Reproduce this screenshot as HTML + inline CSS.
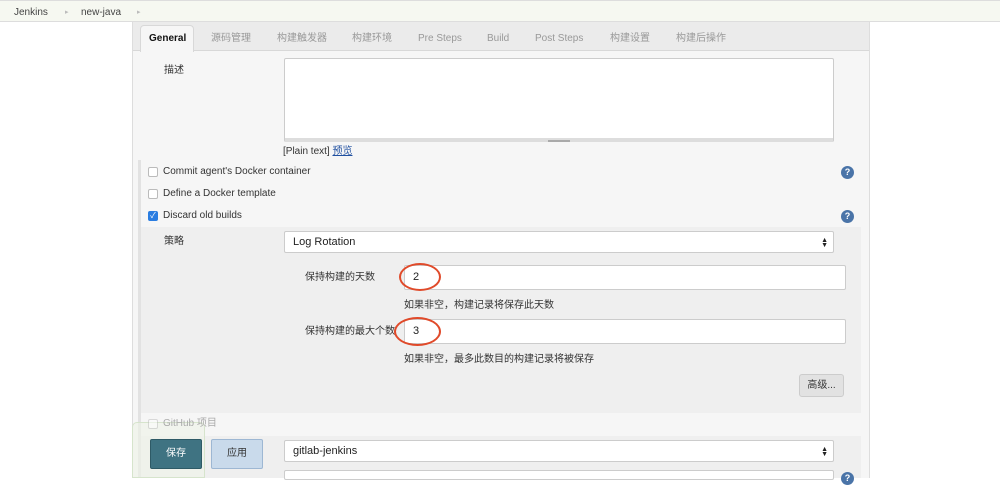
<!DOCTYPE html>
<html><head><meta charset="utf-8"><style>
*{margin:0;padding:0;box-sizing:border-box}
body{width:1000px;height:478px;overflow:hidden;background:#fff;font-family:"Liberation Sans","Noto Sans CJK SC",sans-serif;font-size:10px;line-height:12px;color:#333;position:relative}
.a{position:absolute;line-height:12px}
.cb{position:absolute;width:10px;height:10px;border:1px solid #bbb;border-radius:2px;background:#fff}
.inp{position:absolute;background:#fff;border:1px solid #ccc;border-radius:2px;font-size:11px;color:#222;padding-left:8px}
.help{position:absolute;width:13px;height:13px;border-radius:50%;background:#4a74a8;color:#fff;font-size:9px;font-weight:bold;text-align:center;line-height:13px}
.tab{position:absolute;top:33px;color:#999;font-size:10px;line-height:12px}
.ring{position:absolute;border:2px solid #e04a2a;border-radius:50%}
.arr{position:absolute;right:5px;top:6px;font-size:7px;line-height:5px;color:#222}
</style></head><body>
<div class="a" style="left:0;top:0;width:1000px;height:22px;background:#f6f8f1;border-top:1px solid #ddd;border-bottom:1px solid #ddd"></div>
<div class="a" style="left:14px;top:7px;font-size:10px;color:#444">Jenkins</div>
<div class="a" style="left:65px;top:7px;font-size:7px;color:#bbb">▸</div>
<div class="a" style="left:81px;top:7px;font-size:10px;color:#444">new-java</div>
<div class="a" style="left:137px;top:7px;font-size:7px;color:#bbb">▸</div>

<div class="a" style="left:132px;top:22px;width:738px;height:456px;background:#f6f6f6;border-left:1px solid #ddd;border-right:1px solid #ddd"></div>
<div class="a" style="left:133px;top:22px;width:736px;height:29px;background:#ebebeb;border-bottom:1px solid #d8d8d8"></div>
<div class="a" style="left:140px;top:25px;width:54px;height:27px;background:#f6f6f6;border:1px solid #d8d8d8;border-bottom:none;border-radius:4px 4px 0 0"></div>
<div class="tab" style="left:149px;color:#111;font-weight:bold">General</div>
<div class="tab" style="left:211px">源码管理</div>
<div class="tab" style="left:277px">构建触发器</div>
<div class="tab" style="left:352px">构建环境</div>
<div class="tab" style="left:418px">Pre Steps</div>
<div class="tab" style="left:487px">Build</div>
<div class="tab" style="left:535px">Post Steps</div>
<div class="tab" style="left:610px">构建设置</div>
<div class="tab" style="left:676px">构建后操作</div>

<div class="a" style="left:164px;top:65px">描述</div>
<div class="a" style="left:284px;top:58px;width:550px;height:84px;background:#fff;border:1px solid #ccc;border-radius:2px"></div>
<div class="a" style="left:285px;top:138px;width:548px;height:4px;background:#ddd"></div>
<div class="a" style="left:548px;top:140px;width:22px;height:2px;background:#aaa"></div>
<div class="a" style="left:283px;top:146px;font-size:10px">[Plain text] <span style="color:#2050a0;text-decoration:underline">预览</span></div>

<div class="a" style="left:138px;top:160px;width:3px;height:318px;background:#e2e2e2"></div>
<div class="cb" style="left:148px;top:167px"></div>
<div class="a" style="left:163px;top:166px">Commit agent's Docker container</div>
<div class="help" style="left:841px;top:166px">?</div>
<div class="cb" style="left:148px;top:189px"></div>
<div class="a" style="left:163px;top:188px">Define a Docker template</div>
<div class="cb" style="left:148px;top:211px;background:#2a7de1;border-color:#2a7de1;color:#fff;font-size:8px;line-height:8px;text-align:center">✓</div>
<div class="a" style="left:163px;top:210px">Discard old builds</div>
<div class="help" style="left:841px;top:210px">?</div>

<div class="a" style="left:141px;top:227px;width:720px;height:186px;background:#efefef"></div>
<div class="a" style="left:164px;top:236px">策略</div>
<div class="inp" style="left:284px;top:231px;width:550px;height:22px;line-height:20px">Log Rotation<div class="arr">▲<br>▼</div></div>
<div class="a" style="left:305px;top:272px">保持构建的天数</div>
<div class="inp" style="left:404px;top:265px;width:442px;height:25px;line-height:23px">2</div>
<div class="ring" style="left:399px;top:263px;width:42px;height:28px"></div>
<div class="a" style="left:404px;top:300px">如果非空，构建记录将保存此天数</div>
<div class="a" style="left:305px;top:326px">保持构建的最大个数</div>
<div class="inp" style="left:404px;top:319px;width:442px;height:25px;line-height:23px">3</div>
<div class="ring" style="left:394px;top:317px;width:47px;height:29px"></div>
<div class="a" style="left:404px;top:354px">如果非空，最多此数目的构建记录将被保存</div>
<div class="a" style="left:799px;top:374px;width:45px;height:23px;background:#e2e2e2;border:1px solid #ccc;border-radius:3px;text-align:center;line-height:21px">高级...</div>

<div class="a" style="left:141px;top:436px;width:720px;height:42px;background:#efefef"></div>
<div class="inp" style="left:284px;top:440px;width:550px;height:22px;line-height:20px">gitlab-jenkins<div class="arr">▲<br>▼</div></div>
<div class="inp" style="left:284px;top:470px;width:550px;height:10px"></div>
<div class="help" style="left:841px;top:472px">?</div>

<div class="a" style="left:132px;top:422px;width:73px;height:56px;background:rgba(238,244,232,.6);border:1px solid #d6e4cc;border-radius:5px 5px 0 0"></div>
<div class="cb" style="left:148px;top:419px;opacity:.5"></div>
<div class="a" style="left:163px;top:418px;color:#aaa">GitHub 项目</div>
<div class="a" style="left:150px;top:439px;width:52px;height:30px;background:#3f7382;border:1px solid #2e5a66;border-radius:2px;color:#fff;text-align:center;line-height:28px">保存</div>
<div class="a" style="left:211px;top:439px;width:52px;height:30px;background:#c9daeb;border:1px solid #9db7d3;border-radius:2px;color:#333;text-align:center;line-height:28px">应用</div>
</body></html>
